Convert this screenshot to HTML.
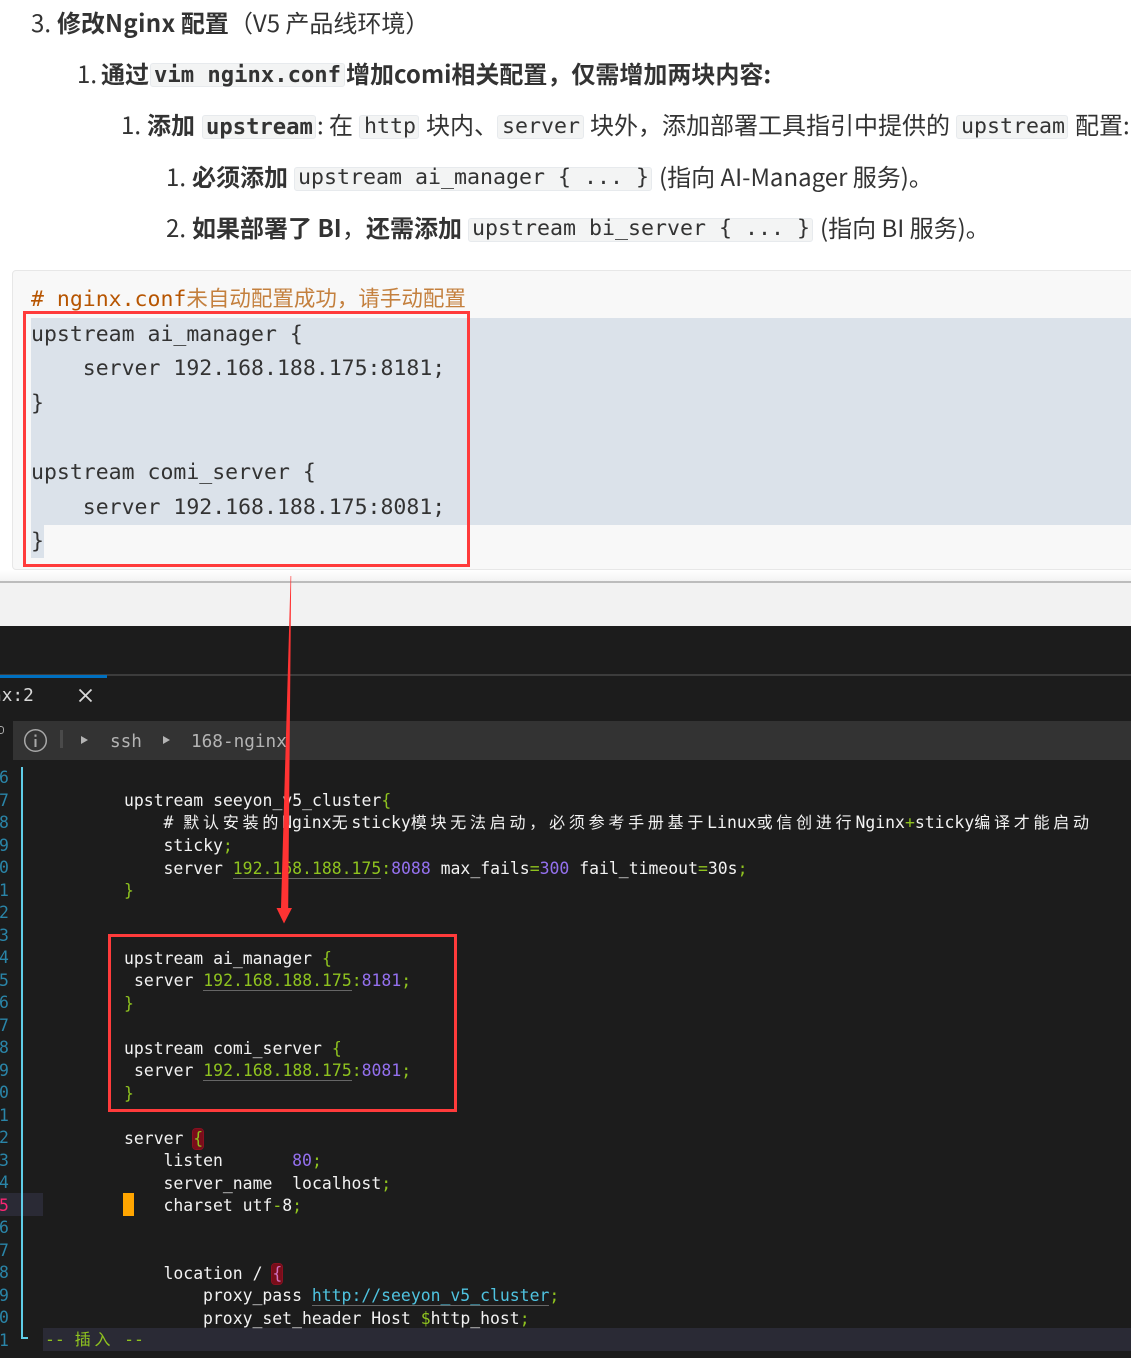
<!DOCTYPE html>
<html lang="zh"><head><meta charset="utf-8"><title>Nginx</title>
<style>
html,body{margin:0;padding:0;width:1131px;height:1358px;overflow:hidden;background:#fff}
#p{position:relative;width:1131px;height:1358px;overflow:hidden}
.a{position:absolute}
.x{position:absolute;white-space:pre;font:24px/34px "Noto Sans CJK SC","Liberation Sans",sans-serif;color:#333}
.x b{font-weight:700}
.b{position:absolute;box-sizing:border-box;height:24px;background:#f3f4f4;border:1px solid #e7eaed;border-radius:3px}
.m{position:absolute;white-space:pre;font:21.6px/24px "DejaVu Sans Mono","Noto Sans CJK SC",monospace;color:#333}
.c{position:absolute;left:31px;white-space:pre;font:21.5px/30px "DejaVu Sans Mono","Noto Sans CJK SC",monospace;color:#333}
.t{position:absolute;white-space:pre;font:16.46px/22px "DejaVu Sans Mono","Noto Sans CJK SC",monospace;color:#f2f2f2}
.n{position:absolute;left:-1px;font:16.4px/22px "DejaVu Sans Mono",monospace;color:#2a85a8}
.g{color:#8fc31f}.v{color:#9470ee}
.u{color:#8fc31f;border-bottom:1px solid #666}
.z{font-size:16px;letter-spacing:3.76px}
.k{display:inline-block;background:#7a0d1a;outline:1px solid #8a1020;border-radius:3px;line-height:20px;height:20px;color:#8fc31f}
</style></head><body><div id="p">

<div class="x" style="left:31px;top:5px">3.</div>
<div class="x" style="left:57px;top:5px"><b>修改<span style="letter-spacing:.4px">Nginx</span> 配置</b>（V5 产品线环境）</div>

<div class="x" style="left:77px;top:56px">1.</div>
<div class="x" style="left:101px;top:56px"><b>通过</b></div>
<div class="b" style="left:150px;top:63px;width:195px"></div>
<div class="m" style="left:154px;top:63px;font-size:22.2px;font-weight:700">vim nginx.conf</div>
<div class="x" style="left:346px;top:56px"><b>增加comi相关配置，仅需增加两块内容:</b></div>

<div class="x" style="left:121px;top:107px">1.</div>
<div class="x" style="left:147px;top:107px"><b>添加</b></div>
<div class="b" style="left:202px;top:115px;width:114px"></div>
<div class="m" style="left:206px;top:115px;font-size:22.2px;font-weight:700">upstream</div>
<div class="x" style="left:317px;top:107px">:</div>
<div class="x" style="left:329px;top:107px">在</div>
<div class="b" style="left:359px;top:115px;width:60px"></div>
<div class="m" style="left:364px;top:115px">http</div>
<div class="x" style="left:426px;top:107px">块内、</div>
<div class="b" style="left:497px;top:115px;width:87px"></div>
<div class="m" style="left:502px;top:115px">server</div>
<div class="x" style="left:590px;top:107px">块外，添加部署工具指引中提供的</div>
<div class="b" style="left:956px;top:115px;width:112px"></div>
<div class="m" style="left:961px;top:115px">upstream</div>
<div class="x" style="left:1075px;top:107px">配置:</div>

<div class="x" style="left:166px;top:159px">1.</div>
<div class="x" style="left:192px;top:159px"><b>必须添加</b></div>
<div class="b" style="left:294px;top:167px;width:358px"></div>
<div class="m" style="left:298px;top:166px">upstream ai_manager { ... }</div>
<div class="x" style="left:659px;top:159px">(指向 AI-Manager 服务)。</div>

<div class="x" style="left:166px;top:210px">2.</div>
<div class="x" style="left:192px;top:210px"><b>如果部署了 BI</b></div>
<div class="x" style="left:342px;top:210px">，</div>
<div class="x" style="left:366px;top:210px"><b>还需添加</b></div>
<div class="b" style="left:468px;top:218px;width:345px"></div>
<div class="m" style="left:472px;top:217px">upstream bi_server { ... }</div>
<div class="x" style="left:820px;top:210px">(指向 BI 服务)。</div>

<!-- code block -->
<div class="a" style="left:12px;top:270px;width:1125px;height:300px;box-sizing:border-box;background:#f8f8f8;border:1px solid #e7e7e7;border-radius:4px"></div>
<div class="a" style="left:31px;top:318px;width:1100px;height:207px;background:#dbe2ea"></div>
<div class="a" style="left:31px;top:525px;width:13px;height:33px;background:#dbe2ea"></div>
<div class="c" style="top:285px;color:#b75501">#&#32;nginx.conf<span style="color:#c4803e">未自动配置成功，请手动配置</span></div>
<div class="c" style="top:320px">upstream ai_manager {</div>
<div class="c" style="top:354px">    server 192.168.188.175:8181;</div>
<div class="c" style="top:389px">}</div>
<div class="c" style="top:458px">upstream comi_server {</div>
<div class="c" style="top:493px">    server 192.168.188.175:8081;</div>
<div class="c" style="top:527px">}</div>

<!-- divider band -->
<div class="a" style="left:0;top:570px;width:1131px;height:11px;background:linear-gradient(#fff,#f3f3f3)"></div>
<div class="a" style="left:0;top:581px;width:1131px;height:2px;background:#bcbcbc"></div>
<div class="a" style="left:0;top:583px;width:1131px;height:43px;background:#f2f2f2"></div>

<!-- terminal -->
<div class="a" style="left:0;top:626px;width:1131px;height:732px;background:#1c1c1c"></div>
<div class="a" style="left:0;top:674px;width:1131px;height:2px;background:#3c3c3c"></div>
<div class="a" style="left:0;top:675px;width:107px;height:3px;background:#0070c0"></div>
<div class="t" style="left:-9px;top:685px;font-size:17.8px;color:#d8d8d8">nx:2</div>
<svg class="a" style="left:78px;top:688px" width="15" height="15" viewBox="0 0 15 15"><path d="M1.5 1.5L13.5 13.5M13.5 1.5L1.5 13.5" stroke="#d8d8d8" stroke-width="1.8" fill="none"/></svg>
<div class="a" style="left:-3px;top:726px;width:5px;height:6px;border:1px solid #aaa;border-radius:3px"></div>
<div class="a" style="left:13px;top:721px;width:1118px;height:39px;background:#333"></div>
<svg class="a" style="left:23px;top:728px" width="25" height="25" viewBox="0 0 25 25"><circle cx="12.5" cy="12.5" r="10.8" stroke="#a8a8a8" stroke-width="1.5" fill="none"/><path d="M12.5 11v8M12.5 6.5v2.2" stroke="#a8a8a8" stroke-width="2" fill="none"/></svg>
<div class="a" style="left:60px;top:730px;width:3px;height:18px;background:#4a4a4a"></div>
<svg class="a" style="left:81px;top:736px" width="7" height="8" viewBox="0 0 7 8"><path d="M0 0L7 4L0 8Z" fill="#b4b4b4"/></svg>
<svg class="a" style="left:163px;top:736px" width="7" height="8" viewBox="0 0 7 8"><path d="M0 0L7 4L0 8Z" fill="#b4b4b4"/></svg>
<div class="t" style="left:110px;top:731px;font-size:17.7px;color:#b4b4b4">ssh</div>
<div class="t" style="left:191px;top:731px;font-size:17.7px;color:#b4b4b4">168-nginx</div>

<div class="a" style="left:0;top:1193px;width:43px;height:23px;background:#2a2a35"></div>
<div class="a" style="left:43px;top:1328px;width:1088px;height:23px;background:#2a2a35"></div>
<div class="a" style="left:21px;top:767px;width:2px;height:572px;background:#5fcde8"></div>
<div class="a" style="left:21px;top:1337px;width:7px;height:2px;background:#5fcde8"></div>
<div class="a" style="left:123px;top:1193px;width:11px;height:23px;background:#ffa500"></div>

<div class="n" style="top:767px">6</div><div class="n" style="top:790px">7</div><div class="n" style="top:812px">8</div><div class="n" style="top:835px">9</div><div class="n" style="top:857px">0</div><div class="n" style="top:880px">1</div><div class="n" style="top:902px">2</div><div class="n" style="top:925px">3</div><div class="n" style="top:947px">4</div><div class="n" style="top:970px">5</div><div class="n" style="top:992px">6</div><div class="n" style="top:1015px">7</div><div class="n" style="top:1037px">8</div><div class="n" style="top:1060px">9</div><div class="n" style="top:1082px">0</div><div class="n" style="top:1105px">1</div><div class="n" style="top:1127px">2</div><div class="n" style="top:1150px">3</div><div class="n" style="top:1172px">4</div><div class="n" style="top:1195px;color:#f92672">5</div><div class="n" style="top:1217px">6</div><div class="n" style="top:1240px">7</div><div class="n" style="top:1262px">8</div><div class="n" style="top:1285px">9</div><div class="n" style="top:1307px">0</div><div class="n" style="top:1330px">1</div>

<div class="t" style="left:124px;top:790px">upstream seeyon_v5_cluster<span class="g">{</span></div>
<div class="t" style="left:163.5px;top:812px"># <span class="z">默认安装的</span>Nginx<span class="z">无</span>sticky<span class="z">模块无法启动，必须参考手册基于</span>Linux<span class="z">或信创进行</span>Nginx<span class="g">+</span>sticky<span class="z">编译才能启动</span></div>
<div class="t" style="left:163.5px;top:835px">sticky<span class="g">;</span></div>
<div class="t" style="left:163.5px;top:858px">server <span class="u">192.168.188.175</span><span class="g">:</span><span class="v">8088</span> max_fails<span class="g">=</span><span class="v">300</span> fail_timeout<span class="g">=</span>30s<span class="g">;</span></div>
<div class="t" style="left:124px;top:880px;color:#8fc31f">}</div>

<div class="t" style="left:124px;top:948px">upstream ai_manager <span class="g">{</span></div>
<div class="t" style="left:134px;top:970px">server <span class="u">192.168.188.175</span><span class="g">:</span><span class="v">8181</span><span class="g">;</span></div>
<div class="t" style="left:124px;top:993px;color:#8fc31f">}</div>
<div class="t" style="left:124px;top:1038px">upstream comi_server <span class="g">{</span></div>
<div class="t" style="left:134px;top:1060px">server <span class="u">192.168.188.175</span><span class="g">:</span><span class="v">8081</span><span class="g">;</span></div>
<div class="t" style="left:124px;top:1083px;color:#8fc31f">}</div>

<div class="t" style="left:124px;top:1128px">server <span class="k">{</span></div>
<div class="t" style="left:163.5px;top:1150px">listen       <span class="v">80</span><span class="g">;</span></div>
<div class="t" style="left:163.5px;top:1173px">server_name  localhost<span class="g">;</span></div>
<div class="t" style="left:163.5px;top:1195px">charset utf<span class="g">-</span>8<span class="g">;</span></div>
<div class="t" style="left:163.5px;top:1263px">location / <span class="k" style="color:#d070c0">{</span></div>
<div class="t" style="left:203px;top:1285px">proxy_pass <span style="color:#4fc3e0;border-bottom:1px solid #666">http://seeyon_v5_cluster</span><span class="g">;</span></div>
<div class="t" style="left:203px;top:1308px">proxy_set_header Host <span class="g">$</span>http_host<span class="g">;</span></div>
<div class="t" style="left:45px;top:1329px;color:#8fc31f">-- <span class="z">插入</span> --</div>

<!-- red annotations -->
<div class="a" style="left:23px;top:311px;width:447px;height:256px;box-sizing:border-box;border:3px solid #ff3b3b"></div>
<div class="a" style="left:108px;top:934px;width:349px;height:178px;box-sizing:border-box;border:3px solid #ff3b3b"></div>
<svg class="a" style="left:0;top:0" width="1131" height="1358" viewBox="0 0 1131 1358"><path d="M290.6 576L291.2 576L288.2 908L292 908L284 923.5L276.5 908L281 908Z" fill="#ff3333"/></svg>

</div></body></html>
